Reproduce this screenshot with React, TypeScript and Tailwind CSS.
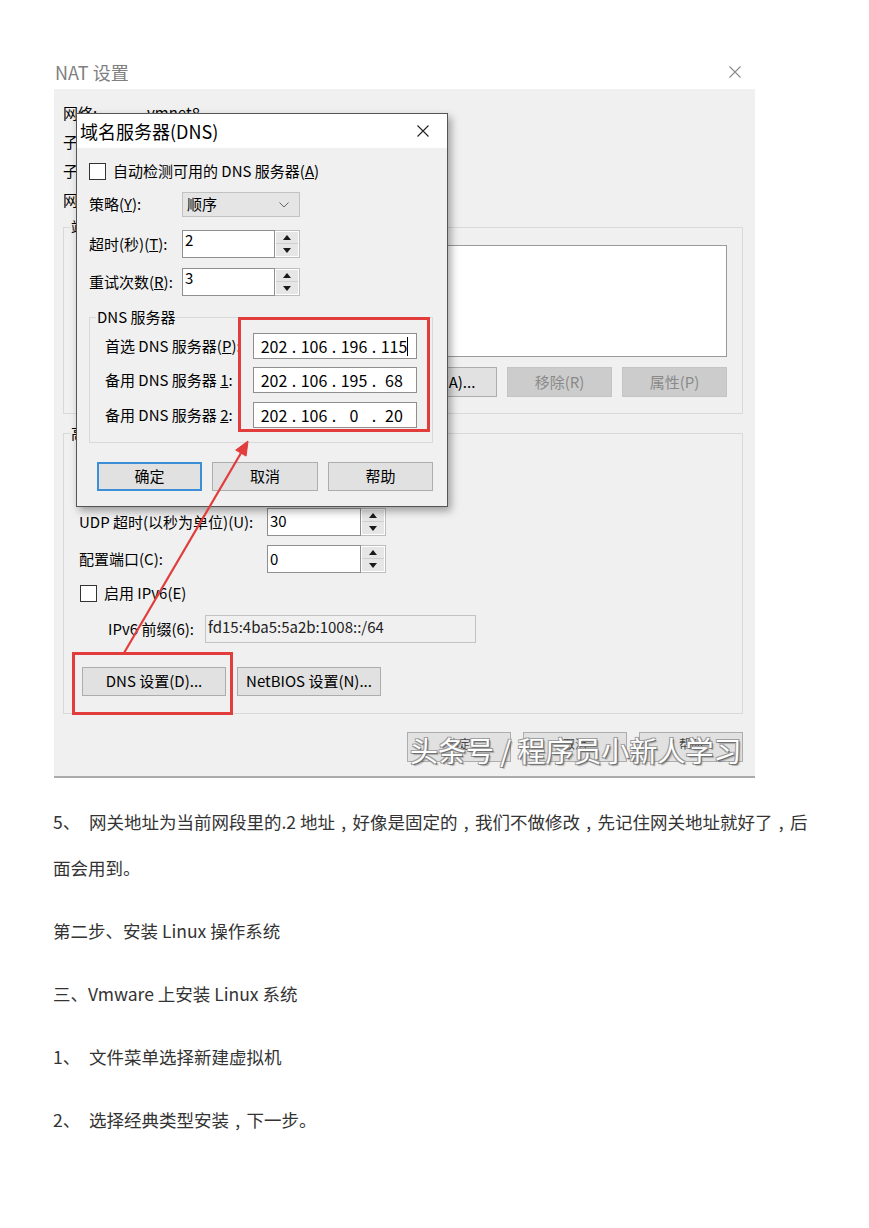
import React from "react";

// shared font stack for the dialog screenshot
const ui = "font-['Noto_Sans_CJK_SC',sans-serif]";

const Tri = ({ up }: { up?: boolean }) => (
  <svg width="8" height="5" viewBox="0 0 8 5">
    <path d={up ? "M0 5 L4 0 L8 5 Z" : "M0 0 L4 5 L8 0 Z"} fill="#1a1a1a" />
  </svg>
);

const Close = ({ color }: { color: string }) => (
  <svg width="12" height="12" viewBox="0 0 12 12">
    <path d="M0.5 0.5 L11.5 11.5 M11.5 0.5 L0.5 11.5" stroke={color} strokeWidth="1.1" />
  </svg>
);

// full-width comma, centred in its cell like the source document font
const C = () => <span className="inline-block w-[1em] text-center">,</span>;

function SpinBox({ value, inputClass }: { value: string; inputClass: string }) {
  return (
    <div className="flex h-[28px]">
      <div className={inputClass}>{value}</div>
      <div className="flex w-[25px] flex-col border border-l-0 border-[#bdbdbd] bg-white p-[1px]">
        <div className="flex h-1/2 items-center justify-center border-b border-[#cfcfcf] bg-[#e6e6e6]">
          <Tri up />
        </div>
        <div className="flex h-1/2 items-center justify-center bg-[#e6e6e6]">
          <Tri />
        </div>
      </div>
    </div>
  );
}

function Btn({ children, className }: { children: React.ReactNode; className: string }) {
  return <div className={`flex items-center justify-center ${className}`}>{children}</div>;
}

function Group({ label, className, children }: { label: string; className: string; children: React.ReactNode }) {
  return (
    <div className={`relative border border-[#d9d9d9] ${className}`}>
      <span className="absolute left-[6px] top-[-11px] bg-[#f0f0f0] px-[1px] text-[15px] leading-[20px] text-black">
        {label}
      </span>
      {children}
    </div>
  );
}

const Check = () => <span className="block h-[17px] w-[17px] shrink-0 border border-[#333] bg-white" />;

function IpBox({ parts, caret }: { parts: string[]; caret?: boolean }) {
  return (
    <div className="flex h-[26px] w-[164px] items-center border border-[#8f8f8f] bg-white pl-[5px] text-[16px] leading-[20px] text-black">
      {parts.map((p, i) => (
        <React.Fragment key={i}>
          {i > 0 && <span className="w-[10px] text-center">.</span>}
          <span className="w-[30px] text-center">{p}</span>
        </React.Fragment>
      ))}
      {caret && <span className="ml-[-2px] h-[19px] w-px bg-black" />}
    </div>
  );
}

function NatWindow() {
  return (
    <div className="flex h-full flex-col">
      <div className="flex h-[34px] items-center justify-between bg-white pl-[1px] pr-[14px]">
        <span className="text-[18px] text-[#808080]">NAT 设置</span>
        <Close color="#8a8a8a" />
      </div>

      <div className="flex flex-1 flex-col border-b-2 border-[#ababab] bg-[#f0f0f0] pl-[9px] pr-[12px] pt-[10px] text-[15px] text-black">
        {/* info rows, mostly covered by the DNS dialog */}
        {[
          ["网络:", "vmnet8"],
          ["子网 IP:", ""],
          ["子网掩码:", ""],
          ["网关 IP(G):", ""],
        ].map(([k, v]) => (
          <div key={k} className="flex h-[29px] items-center">
            <span className="w-[84px]">{k}</span>
            <span>{v}</span>
          </div>
        ))}

        <Group label="端口转发(F)" className="mt-[12px] h-[187px] px-[15px] pt-[17px]">
          <div className="h-[112px] border border-[#9a9a9a] bg-white" />
          <div className="mt-[10px] flex justify-end gap-[10px]">
            <Btn className="h-[30px] w-[105px] border border-[#adadad] bg-[#e1e1e1] text-[15px]">添加(A)...</Btn>
            <Btn className="h-[30px] w-[105px] border border-[#c4c4c4] bg-[#cccccc] text-[15px] text-[#8a8a8a]">移除(R)</Btn>
            <Btn className="h-[30px] w-[105px] border border-[#c4c4c4] bg-[#cccccc] text-[15px] text-[#8a8a8a]">属性(P)</Btn>
          </div>
        </Group>

        <Group label="高级" className="mt-[19px] h-[281px] px-[15px] pt-[13px]">
          <div className="flex h-[17px] items-center pl-px">
            <Check />
          </div>
          <div className="mt-[13px] flex h-[17px] items-center pl-px">
            <Check />
          </div>

          <div className="mt-[14px] flex items-center">
            <span className="w-[188px]">UDP 超时(以秒为单位)(U):</span>
            <SpinBox
              value="30"
              inputClass="h-full w-[94px] border border-[#8f8f8f] bg-white pl-[2px] pt-[2px] text-[15px] leading-[20px]"
            />
          </div>
          <div className="mt-[9px] flex items-center">
            <span className="w-[188px]">配置端口(C):</span>
            <SpinBox
              value="0"
              inputClass="h-full w-[94px] border border-[#8f8f8f] bg-white pl-[2px] pt-[3px] text-[15px] leading-[20px]"
            />
          </div>
          <div className="mt-[12px] flex h-[17px] items-center gap-[7px] pl-px">
            <Check />
            <span>启用 IPv6(E)</span>
          </div>
          <div className="mt-[13px] flex h-[28px] items-center pl-[29px]">
            <span className="w-[97px]">IPv6 前缀(6):</span>
            <div className="flex h-full w-[271px] items-center border border-[#c3c3c3] bg-[#f0f0f0] pb-[4px] pl-[2px] text-[15px] text-[#222]">
              fd15:4ba5:5a2b:1008::/64
            </div>
          </div>
          <div className="mt-[24px] flex gap-[11px] pl-[3px]">
            <Btn className="h-[29px] w-[144px] border border-[#adadad] bg-[#e1e1e1] text-[15px]">DNS 设置(D)...</Btn>
            <Btn className="h-[29px] w-[144px] border border-[#adadad] bg-[#e1e1e1] text-[15px]">NetBIOS 设置(N)...</Btn>
          </div>
        </Group>

        <div className="mt-[18px] flex justify-end gap-[12px]">
          <Btn className="h-[30px] w-[104px] items-start border border-[#adadad] bg-[#e1e1e1] pt-[2px] text-[12px] text-[#444]">确定</Btn>
          <Btn className="h-[30px] w-[104px] items-start border border-[#adadad] bg-[#e1e1e1] pt-[2px] text-[12px] text-[#444]">取消</Btn>
          <Btn className="h-[30px] w-[104px] items-start border border-[#adadad] bg-[#e1e1e1] pt-[2px] text-[12px] text-[#444]">帮助</Btn>
        </div>
      </div>
    </div>
  );
}

function DnsDialog() {
  return (
    <div className="absolute left-[22px] top-[58px] flex h-[394px] w-[372px] flex-col border border-[#555] bg-[#f0f0f0] shadow-[3px_4px_8px_rgba(0,0,0,0.35)]">
      <div className="flex h-[34px] items-center justify-between bg-white pl-[3px] pr-[18px]">
        <span className="text-[18px] text-black">域名服务器(DNS)</span>
        <Close color="#222" />
      </div>

      <div className="flex flex-1 flex-col pl-[12px] pt-[15px] text-[15px] text-black">
        <div className="flex h-[17px] items-center gap-[7px]">
          <Check />
          <span>
            自动检测可用的 DNS 服务器(<u>A</u>)
          </span>
        </div>

        <div className="mt-[12px] flex items-center">
          <span className="w-[93px]">
            策略(<u>Y</u>):
          </span>
          <div className="flex h-[25px] w-[118px] items-center justify-between border border-[#c2c2c2] bg-[#e5e5e5] pl-[4px] pr-[10px]">
            <span>顺序</span>
            <svg width="10" height="6" viewBox="0 0 10 6">
              <path d="M0.5 0.5 L5 5 L9.5 0.5" stroke="#666" strokeWidth="1" fill="none" />
            </svg>
          </div>
        </div>

        <div className="mt-[13px] flex items-center">
          <span className="w-[93px]">
            超时(秒)(<u>T</u>):
          </span>
          <SpinBox
            value="2"
            inputClass="h-full w-[93px] border border-[#8f8f8f] bg-white pl-[2px] text-[15px] leading-[18px]"
          />
        </div>
        <div className="mt-[10px] flex items-center">
          <span className="w-[93px]">
            重试次数(<u>R</u>):
          </span>
          <SpinBox
            value="3"
            inputClass="h-full w-[93px] border border-[#8f8f8f] bg-white pl-[2px] text-[15px] leading-[18px]"
          />
        </div>

        <Group label="DNS 服务器" className="mt-[21px] h-[126px] w-[344px] pl-[15px] pt-[15px]">
          <div className="flex items-center">
            <span className="w-[148px]">
              首选 DNS 服务器(<u>P</u>):
            </span>
            <IpBox parts={["202", "106", "196", "115"]} caret />
          </div>
          <div className="mt-[8px] flex items-center">
            <span className="w-[148px]">
              备用 DNS 服务器 <u>1</u>:
            </span>
            <IpBox parts={["202", "106", "195", "68"]} />
          </div>
          <div className="mt-[9px] flex items-center">
            <span className="w-[148px]">
              备用 DNS 服务器 <u>2</u>:
            </span>
            <IpBox parts={["202", "106", "0", "20"]} />
          </div>
        </Group>

        <div className="ml-[8px] mt-[19px] flex gap-[10px]">
          <Btn className="h-[29px] w-[105px] border-2 border-[#3c8fd6] bg-[#e1e1e1] text-[15px]">确定</Btn>
          <Btn className="h-[29px] w-[106px] border border-[#adadad] bg-[#e1e1e1] text-[15px]">取消</Btn>
          <Btn className="h-[29px] w-[105px] border border-[#adadad] bg-[#e1e1e1] text-[15px]">帮助</Btn>
        </div>
      </div>
    </div>
  );
}

function Screenshot() {
  return (
    <div className={`relative ml-[54px] mt-[55px] h-[723px] w-[701px] ${ui}`}>
      <NatWindow />
      <DnsDialog />

      {/* red highlight boxes */}
      <div className="absolute left-[184px] top-[262px] h-[115px] w-[192px] border-[3px] border-[#e23c3c]" />
      <div className="absolute left-[18px] top-[597px] h-[63px] w-[161px] border-[3px] border-[#e23c3c]" />

      {/* arrow */}
      <svg className="pointer-events-none absolute left-0 top-0" width="701" height="723" viewBox="0 0 701 723">
        <line x1="70" y1="598" x2="187" y2="398" stroke="#e23c3c" strokeWidth="2.2" />
        <path d="M194 386 L192.1 401.1 L181.7 395.1 Z" fill="#e23c3c" stroke="#e23c3c" strokeWidth="1" />
      </svg>

      {/* watermark */}
      <div className="absolute left-[356px] top-[679px] whitespace-nowrap text-[28px] leading-[32px] text-white [text-shadow:1px_1px_0_#6f6f6f,-1px_-1px_0_#a0a0a0,1px_-1px_0_#999,-1px_1px_0_#999,2px_2px_1px_rgba(0,0,0,0.25)]">
        头条号 / 程序员小新人学习
      </div>
    </div>
  );
}

export default function App() {
  return (
    <div className="min-h-[1228px] w-[869px] bg-white">
      <Screenshot />

      <div className="pl-[53px] pt-[21px] font-['Noto_Sans_CJK_SC',sans-serif] text-[17.5px] leading-[46px] text-[#333]">
        <p>
          <span className="inline-block w-[36px]">5、</span>
          网关地址为当前网段里的.2 地址<C />好像是固定的<C />我们不做修改<C />先记住网关地址就好了<C />后
          <br />
          面会用到。
        </p>
        <p className="mt-[17px]">第二步、安装 Linux 操作系统</p>
        <p className="mt-[17px]">三、Vmware 上安装 Linux 系统</p>
        <p className="mt-[17px]">
          <span className="inline-block w-[36px]">1、</span>
          文件菜单选择新建虚拟机
        </p>
        <p className="mt-[17px]">
          <span className="inline-block w-[36px]">2、</span>
          选择经典类型安装<C />下一步。
        </p>
      </div>
    </div>
  );
}
